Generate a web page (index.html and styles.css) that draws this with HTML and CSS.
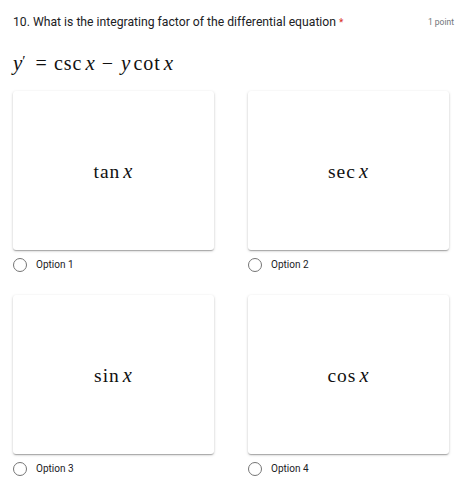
FILE: index.html
```html
<!DOCTYPE html>
<html>
<head>
<meta charset="utf-8">
<link rel="stylesheet" href="styles.css">
</head>
<body>
<div class="question">
  <div class="header">
    <div class="title">10. What is the integrating factor of the differential equation <span class="req">*</span></div>
    <div class="points">1 point</div>
  </div>
  <div class="equation"><i class="v">y</i><span class="prime">′</span><span class="rel">=</span><span class="fn">csc</span><i class="v">x</i><span class="bin">−</span><i class="v">y</i><span class="fn fn-l">cot</span><i class="v">x</i></div>
  <div class="grid">
    <div class="cell">
      <div class="card"><span class="math"><span class="fn">tan</span><i class="v">x</i></span></div>
      <label class="option"><span class="radio"></span><span class="label">Option 1</span></label>
    </div>
    <div class="cell">
      <div class="card"><span class="math"><span class="fn">sec</span><i class="v">x</i></span></div>
      <label class="option"><span class="radio"></span><span class="label">Option 2</span></label>
    </div>
    <div class="cell">
      <div class="card"><span class="math"><span class="fn">sin</span><i class="v">x</i></span></div>
      <label class="option"><span class="radio"></span><span class="label">Option 3</span></label>
    </div>
    <div class="cell">
      <div class="card"><span class="math"><span class="fn">cos</span><i class="v">x</i></span></div>
      <label class="option"><span class="radio"></span><span class="label">Option 4</span></label>
    </div>
  </div>
</div>
</body>
</html>
```

FILE: styles.css
```css
html, body {
  margin: 0;
  padding: 0;
  background: #ffffff;
}
body {
  font-family: Roboto, "Liberation Sans", sans-serif;
  color: #202124;
}
.question {
  padding: 14px 9px 0 13px;
}
.header {
  display: flex;
  justify-content: space-between;
  align-items: flex-start;
}
.title {
  font-size: 12.2px;
  line-height: 16px;
  color: #202124;
}
.req {
  color: #d93025;
  font-size: 10px;
}
.points {
  font-size: 8.5px;
  line-height: 16px;
  color: #70757a;
  margin-right: -5px;
}
.equation {
  font-family: "Liberation Serif", "DejaVu Serif", serif;
  font-size: 20px;
  line-height: 24px;
  margin-top: 18px;
  color: #111;
}
.v {
  font-style: italic;
  font-size: 1.05em;
  margin-right: 1px;
}
.fn {
  letter-spacing: 1px;
  margin-right: 3px;
}
.fn-l {
  margin-left: 2px;
}
.prime {
  font-size: 15px;
  vertical-align: 4px;
  margin-left: -1px;
}
.rel {
  margin: 0 7px 0 10px;
}
.bin {
  margin: 0 8px 0 6px;
}
.grid {
  display: grid;
  grid-template-columns: 201px 201px;
  column-gap: 34px;
  margin-top: 16px;
}
.cell {
  display: flex;
  flex-direction: column;
}
.card {
  height: 159px;
  background: #fff;
  border-radius: 3px;
  box-shadow: 0 1px 1px 0 rgba(0,0,0,.14), 0 2px 1px -1px rgba(0,0,0,.12), 0 1px 3px 0 rgba(0,0,0,.2);
  display: flex;
  align-items: center;
  justify-content: center;
}
.math {
  font-family: "Liberation Serif", "DejaVu Serif", serif;
  font-size: 19.5px;
  color: #111;
  padding-top: 2px;
}
.option {
  display: flex;
  align-items: center;
  height: 30px;
  margin-bottom: 15px;
}
.radio {
  width: 12px;
  height: 12px;
  border: 1.5px solid #757575;
  border-radius: 50%;
  flex: none;
}
.label {
  margin-left: 9px;
  font-size: 10px;
  line-height: 12px;
  color: #202124;
}
```
